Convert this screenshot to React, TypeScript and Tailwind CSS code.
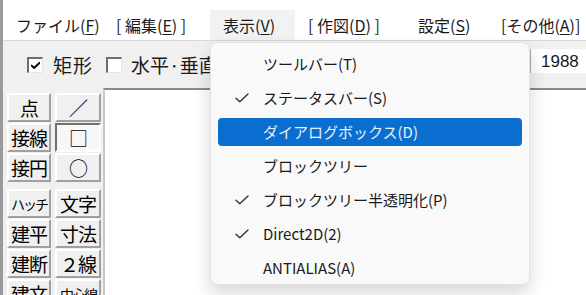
import React from 'react';

const jp = { fontFamily: '"Noto Sans CJK JP", "Noto Sans", sans-serif' };

function U({ children }: { children: React.ReactNode }) {
  return <span className="underline underline-offset-2 decoration-1">{children}</span>;
}

const menus: { w: string; label: React.ReactNode; active?: boolean }[] = [
  { w: 'w-[100px]', label: <>ファイル(<U>F</U>)</> },
  { w: 'w-[107px]', label: <>[ 編集(<U>E</U>) ]</> },
  { w: 'w-[85px]', label: <>表示(<U>V</U>)</>, active: true },
  { w: 'w-[110px]', label: <>[ 作図(<U>D</U>) ]</> },
  { w: 'w-[83px]', label: <>設定(<U>S</U>)</> },
  { w: 'w-[98px]', label: <>[その他(<U>A</U>)]</> },
];

const leftTools = [['点', '接線', '接円'], ['ハッチ', '建平', '建断', '建文']];
const rightTools = [['／', '□', '○'], ['文字', '寸法', '２線', '中心線']];

const items = [
  { label: 'ツールバー(T)', check: false },
  { label: 'ステータスバー(S)', check: true },
  { label: 'ダイアログボックス(D)', check: false, hot: true },
  { label: 'ブロックツリー', check: false },
  { label: 'ブロックツリー半透明化(P)', check: true },
  { label: 'Direct2D(2)', check: true },
  { label: 'ANTIALIAS(A)', check: false },
];

function ToolButton({ label, pressed, w, small }: { label: string; pressed?: boolean; w: string; small?: boolean }) {
  const edge = pressed
    ? 'border-t-[#707070] border-l-[#707070] border-r-white border-b-white bg-[#f7f7f7]'
    : 'border-t-white border-l-white border-r-[#a0a0a0] border-b-[#a0a0a0] bg-[#f0f0f0]';
  return (
    <div className={`${w} h-[29px] shrink-0 flex items-center justify-center border-2 ${edge} text-black leading-none whitespace-nowrap overflow-hidden ${small ? 'text-[14px] tracking-[-2px]' : 'text-[19px] tracking-[-1px]'}`}>
      {label}
    </div>
  );
}

function Check({ className, weight = 1.4 }: { className?: string; weight?: number }) {
  return (
    <svg className={className} viewBox="0 0 14 10" fill="none" stroke="currentColor" strokeWidth={weight} strokeLinecap="round" strokeLinejoin="round">
      <path d="M1 5.2 L4.8 8.8 L13 1" />
    </svg>
  );
}

export default function App() {
  return (
    <div className="relative w-[586px] h-[295px] overflow-hidden flex bg-white text-[#1a1a1a]" style={jp}>
      <div className="w-[3px] shrink-0 bg-[#9a9a9a]" />
      <div className="flex-1 flex flex-col min-h-0">
        {/* menu bar */}
        <div className="h-[40px] shrink-0 flex items-end bg-white">
          {menus.map((m, i) => (
            <div key={i} className={`${m.w} h-[30px] shrink-0 pl-[13px] flex items-center text-[16px] whitespace-nowrap ${m.active ? 'bg-[#f2f2f2]' : ''}`}>
              {m.label}
            </div>
          ))}
        </div>
        {/* toolbar */}
        <div className="h-[48px] shrink-0 bg-[#f0f0f0] border-t border-[#d8d8d8] flex items-center relative">
          <div className="ml-[24px] w-[16px] h-[16px] bg-white border-t-2 border-l-2 border-[#6e6e6e] border-r border-b border-r-[#e4e4e4] border-b-[#e4e4e4] flex items-center justify-center">
            <Check className="w-[9px] h-[7px] text-black" weight={3} />
          </div>
          <span className="ml-[10px] text-[19px] tracking-[1px] leading-none">矩形</span>
          <div className="ml-[13px] w-[16px] h-[16px] bg-white border-t-2 border-l-2 border-[#6e6e6e] border-r border-b border-r-[#e4e4e4] border-b-[#e4e4e4]" />
          <span className="ml-[9px] text-[19px] leading-none whitespace-nowrap">水平·垂直</span>
          <div className="ml-auto self-start mt-[8px] w-[56px] h-[24px] bg-white border-l border-[#b0b0b0] flex items-center pl-[10px] text-[17px] leading-none" style={{ fontFamily: '"Liberation Sans", sans-serif' }}>
            1988
          </div>
        </div>
        {/* body */}
        <div className="flex-1 min-h-0 overflow-hidden flex">
          <div className="w-[100px] shrink-0 bg-[#f0f0f0] flex gap-[4px] pt-[5px] pl-[4px]">
            <div className="flex flex-col">
              {leftTools.map((g, gi) => (
                <div key={gi} className={`flex flex-col gap-[1px] ${gi ? 'mt-[7px]' : ''}`}>
                  {g.map((t) => (
                    <ToolButton key={t} label={t} w="w-[44px]" small={t === 'ハッチ'} />
                  ))}
                </div>
              ))}
            </div>
            <div className="flex flex-col">
              {rightTools.map((g, gi) => (
                <div key={gi} className={`flex flex-col gap-[1px] ${gi ? 'mt-[7px]' : ''}`}>
                  {g.map((t) => (
                    <ToolButton key={t} label={t} w="w-[46px]" pressed={t === '□'} small={t === '中心線'} />
                  ))}
                </div>
              ))}
            </div>
          </div>
          <div className="flex-1 bg-white border-t-2 border-l-2 border-t-[#8a8a8a] border-l-[#c8c8c8]" />
        </div>
      </div>

      {/* dropdown */}
      <div className="absolute left-[210px] top-[42px] w-[320px] h-[243px] bg-[#f9f9f9] rounded-[8px] border border-[#e3e3e3] shadow-[0_8px_18px_rgba(0,0,0,0.16)] pt-[4px] px-[7px]">
        {items.map((it) => (
          <div key={it.label} className="h-[34px] py-[3px]">
            <div className={`h-full rounded-[4px] flex items-center text-[15px] whitespace-nowrap ${it.hot ? 'bg-[#0a6ed1] text-[#e6f0fb]' : 'text-[#1a1a1a]'}`}>
              <div className="w-[45px] flex justify-center pl-[2px]">
                {it.check && <Check className="w-[14px] h-[10px] text-[#333]" />}
              </div>
              <span>{it.label}</span>
            </div>
          </div>
        ))}
      </div>
    </div>
  );
}
